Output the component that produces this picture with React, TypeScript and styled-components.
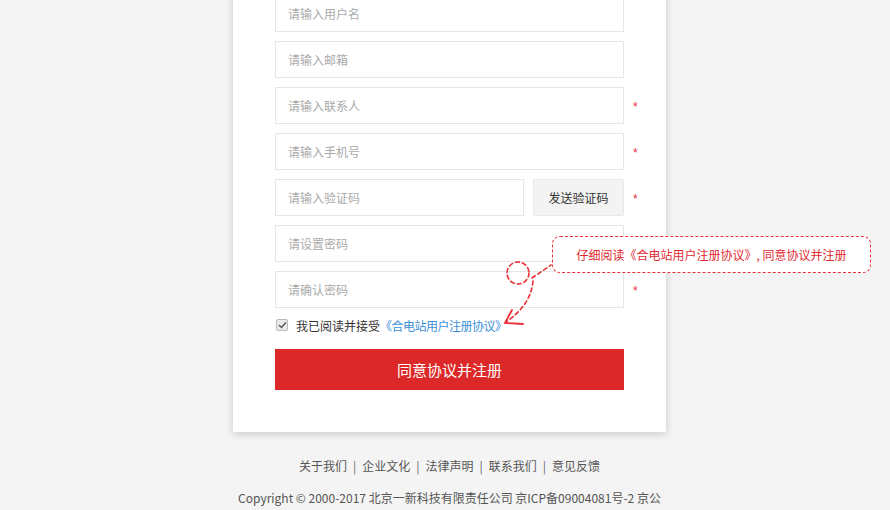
import styled, { createGlobalStyle } from "styled-components";

const GlobalStyle = createGlobalStyle`
    html {
        overflow: hidden;
    }
    body {
        margin: 0;
        padding: 0;
        background: #f4f4f4;
        font-family: "Noto Sans CJK SC", "Liberation Sans", sans-serif;
    }
    * {
        box-sizing: border-box;
    }
`;

type Field = {
    placeholder: string;
    required?: boolean;
    code?: boolean;
};

const FIELDS: Field[] = [
    { placeholder: "请输入用户名" },
    { placeholder: "请输入邮箱" },
    { placeholder: "请输入联系人", required: true },
    { placeholder: "请输入手机号", required: true },
    { placeholder: "请输入验证码", required: true, code: true },
    { placeholder: "请设置密码" },
    { placeholder: "请确认密码", required: true },
];

const FOOTER_LINKS = ["关于我们", "企业文化", "法律声明", "联系我们", "意见反馈"];

const App: React.FC = () => (
    <Page>
        <GlobalStyle />
        <Card>
            <Form>
                {FIELDS.map((f) => (
                    <Row key={f.placeholder}>
                        {f.code ? (
                            <CodeGroup>
                                <Input $width={249}>{f.placeholder}</Input>
                                <CodeButton>发送验证码</CodeButton>
                            </CodeGroup>
                        ) : (
                            <Input $width={349}>{f.placeholder}</Input>
                        )}
                        <Star>{f.required ? "*" : ""}</Star>
                    </Row>
                ))}
                <Agree>
                    <Check>
                        <svg width="9" height="8" viewBox="0 0 9 8">
                            <path d="M1 4 L3.5 6.5 L8 1.5" fill="none" stroke="#555" strokeWidth="1.4" />
                        </svg>
                    </Check>
                    我已阅读并接受<AgreeLink>《合电站用户注册协议》</AgreeLink>
                </Agree>
                <Submit>同意协议并注册</Submit>

                <Tip>仔细阅读《合电站用户注册协议》, 同意协议并注册</Tip>
                <Mark width="70" height="80" viewBox="0 0 70 80">
                    <g fill="none" stroke="#ea2f36" strokeWidth="1.6" strokeDasharray="4 3" strokeLinecap="round">
                        <circle cx="23" cy="18" r="11" />
                        <path d="M37 23 L56 10" />
                        <path d="M38 26 Q36 50 11 67" />
                    </g>
                    <g fill="none" stroke="#ea2f36" strokeWidth="1.8" strokeLinecap="round">
                        <path d="M17 55 L10 68 L28 69" />
                    </g>
                </Mark>
            </Form>
        </Card>
        <Footer>
            <Links>
                {FOOTER_LINKS.map((l, i) => (
                    <LinkItem key={l}>
                        {i > 0 && <Sep>|</Sep>}
                        {l}
                    </LinkItem>
                ))}
            </Links>
            <Copy>Copyright © 2000-2017 北京一新科技有限责任公司 京ICP备09004081号-2 京公</Copy>
        </Footer>
    </Page>
);

const Page = styled.div`
    width: 899px;
    padding-top: 1px;
    margin-top: -1px;
`;

const Card = styled.div`
    width: 433px;
    margin: -40px auto 0;
    padding: 35px 0 42px 42px;
    background: #fff;
    box-shadow: 0 2px 8px rgba(0, 0, 0, 0.18);
`;

const Form = styled.div`
    position: relative;
    display: flex;
    flex-direction: column;
`;

const Row = styled.div`
    display: flex;
    align-items: center;
    height: 37px;
    margin-bottom: 9px;
`;

const CodeGroup = styled.div`
    display: flex;
    flex-shrink: 0;
    gap: 9px;
    width: 349px;
`;

const Input = styled.div<{ $width: number }>`
    flex-shrink: 0;
    width: ${(p) => p.$width}px;
    height: 37px;
    display: flex;
    align-items: center;
    padding-left: 12px;
    border: 1px solid #e6e6e6;
    color: #aaa;
    font-size: 12px;
`;

const CodeButton = styled.div`
    flex-shrink: 0;
    width: 91px;
    height: 37px;
    display: flex;
    align-items: center;
    justify-content: center;
    background: #f3f3f3;
    border: 1px solid #e8e8e8;
    border-radius: 2px;
    color: #333;
    font-size: 12px;
`;

const Star = styled.span`
    margin-left: 9px;
    width: 10px;
    color: #e8323c;
    font-size: 12px;
    font-family: "Liberation Sans", sans-serif;
    line-height: 1;
    padding-top: 3px;
`;

const Agree = styled.div`
    display: flex;
    align-items: center;
    height: 18px;
    margin-top: -1px;
    color: #333;
    font-size: 12px;
`;

const Check = styled.span`
    display: inline-flex;
    align-items: center;
    justify-content: center;
    width: 12px;
    height: 12px;
    margin: 0 8px 0 1px;
    border: 1px solid #b9b9b9;
    border-radius: 2px;
    background: #e9e9e9;
`;

const AgreeLink = styled.span`
    color: #3d8fd8;
    letter-spacing: -0.5px;
`;

const Submit = styled.div`
    margin-top: 15px;
    width: 349px;
    height: 41px;
    display: flex;
    align-items: center;
    justify-content: center;
    background: #dc2828;
    color: #fff;
    font-size: 15px;
`;

const Tip = styled.div`
    position: absolute;
    left: 277px;
    top: 241px;
    width: 319px;
    height: 37px;
    display: flex;
    align-items: center;
    justify-content: center;
    background: #fff;
    border: 1px dashed #ea2f36;
    border-radius: 8px;
    color: #e0282f;
    font-size: 12px;
`;

const Mark = styled.svg`
    position: absolute;
    left: 220px;
    top: 260px;
`;

const Footer = styled.div`
    display: flex;
    flex-direction: column;
    align-items: center;
    padding-top: 25px;
    color: #555;
    font-size: 12px;
`;

const Links = styled.div`
    display: flex;
    height: 16px;
    align-items: center;
`;

const LinkItem = styled.span`
    display: flex;
    align-items: center;
`;

const Sep = styled.span`
    padding: 0 6px;
    color: #666;
`;

const Copy = styled.div`
    margin-top: 16px;
    color: #555;
`;

export default App;
